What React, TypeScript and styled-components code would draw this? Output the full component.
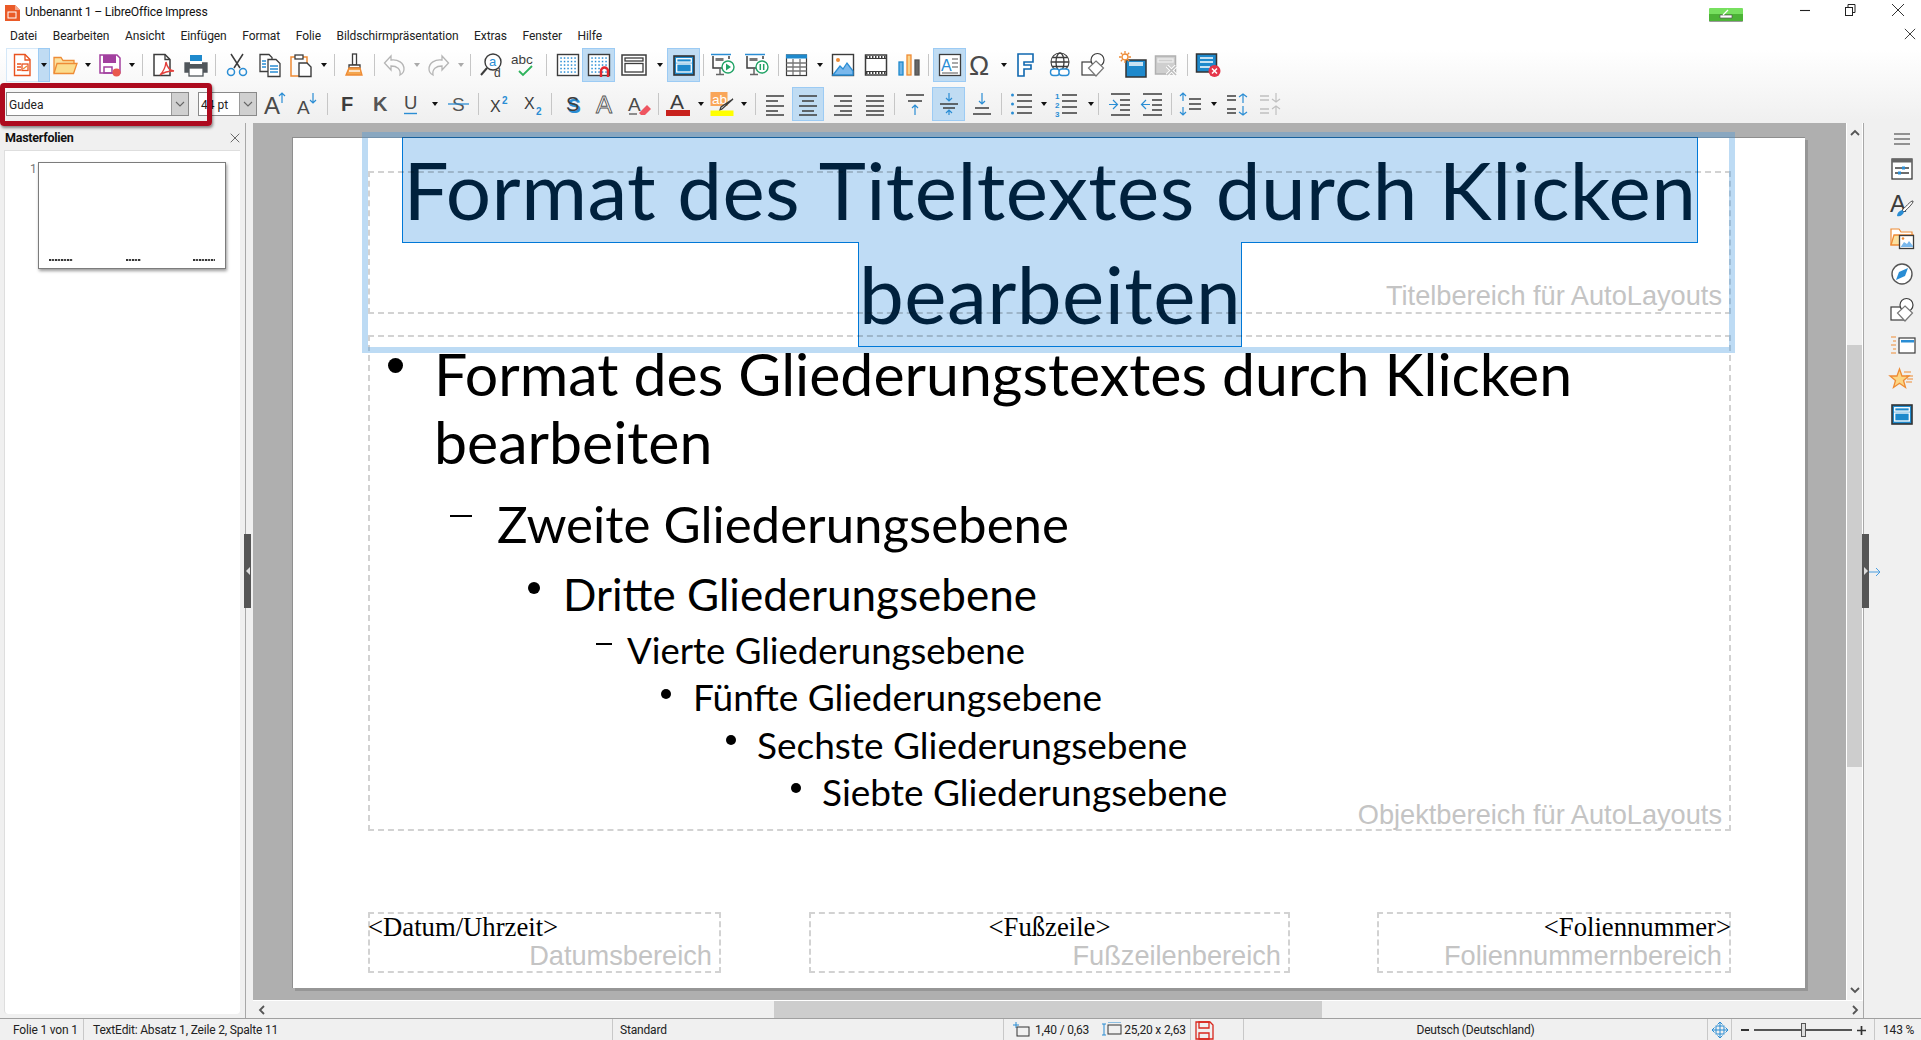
import React from "react";
import styled, { createGlobalStyle, css } from "styled-components";

const Global = createGlobalStyle`
  html, body { margin: 0; padding: 0; overflow: hidden; background: #fff; }
  #root { width: 1921px; height: 1040px; }
`;
const UI = `Roboto, "Liberation Sans", sans-serif`;
const SLIDE = `Lato, "Noto Sans", sans-serif`;
const DK = "#3c3c3c";
const BL = "#2a8dd4";
const OR = "#ee8b35";

const Page = styled.div`
  position: relative; width: 1921px; height: 1040px; display: flex; flex-direction: column;
  font-family: ${UI}; color: #222; overflow: hidden;
`;
const Head = styled.header`
  height: 123px; flex: none; background: linear-gradient(#fff 0, #fff 50px, #f0f0f0 120px);
`;
const TitleBar = styled.div`
  height: 26px; display: flex; align-items: center; padding-left: 5px; font-size: 12.2px; color: #111;
`;
const TitleText = styled.span` margin-left: 5px; margin-top: -2px; letter-spacing: -0.2px; `;
const Notice = styled.div`
  margin-left: auto; margin-top: 3px; width: 34px; height: 13px; border-radius: 1px;
  background: linear-gradient(#77e05f 0 45%, #4cb336 45% 100%); border-bottom: 1px solid #9a9a9a;
  display: flex; align-items: center; justify-content: center;
`;
const WinBtn = styled.div<{ $ml: number }>`
  margin-left: ${p => p.$ml}px; width: 14px; height: 14px; margin-top: -6px; flex: none;
`;
const WinEnd = styled.span` flex: 0 0 16px; `;
const MenuBar = styled.nav`
  height: 20px; display: flex; align-items: center; padding-left: 10px; gap: 15.6px; font-size: 12px; position: relative;
`;
const MenuItem = styled.span` letter-spacing: -0.08px; white-space: nowrap; `;
const DocClose = styled.div` margin-left: auto; margin-right: 5px; width: 12px; height: 12px; margin-top: -4px; `;
const Row = styled.div<{ $top: number }>`
  display: flex; align-items: center; height: 34px; margin-top: ${p => p.$top}px; padding-left: 6px;
`;
const Tool = styled.div<{ $w: number; $on?: boolean; $soft?: boolean }>`
  flex: 0 0 ${p => p.$w}px; min-width: 0; height: 34px; display: flex; align-items: center; justify-content: center;
  box-sizing: border-box; position: relative;
  ${p => p.$on && css` background: #c0dcf3; border: 1px solid #9ccbf4; `}
  ${p => p.$soft && css` border: 1px solid #d5e8f8; border-right: 0; background: #fbfdff; `}
  svg { flex: none; overflow: visible; }
`;
const Tri = styled.i<{ $off?: boolean }>`
  display: block; width: 0; height: 0; border-left: 3.5px solid transparent; border-right: 3.5px solid transparent;
  border-top: 4px solid ${p => (p.$off ? "#aaa" : "#111")};
`;
const SepLine = styled.i` display: block; width: 1px; height: 22px; background: #c6c6c6; `;
const Combo = styled.div<{ $w: number; $ml?: number }>`
  flex: 0 0 ${p => p.$w}px; margin-left: ${p => p.$ml || 0}px; height: 24px; box-sizing: border-box; background: #fff;
  border: 1px solid #8a8a8a; display: flex; align-items: center; font-size: 12px; color: #222; padding-left: 2px;
`;
const ComboText = styled.span` flex: 1; white-space: nowrap; padding-top: 1px; `;
const ComboBtn = styled.div`
  flex: 0 0 16px; height: 100%; background: #d0d0d0; border-left: 1px solid #9a9a9a;
  display: flex; align-items: center; justify-content: center;
`;
const Mark = styled.div`
  position: absolute; left: 0; top: 83px; width: 212px; height: 43px; box-sizing: border-box;
  border: 5px solid #ad0a1e; border-radius: 4px; box-shadow: 1px 2px 3px rgba(0,0,0,.45);
`;
const Main = styled.main` flex: 1; display: flex; min-height: 0; `;
const Panel = styled.aside`
  flex: 0 0 253px; background: #f0f0f0; display: flex; flex-direction: column; box-sizing: border-box;
  padding-right: 7px;
`;
const PanelInner = styled.div`
  flex: 1; display: flex; flex-direction: column; border-right: 1px solid #a8a8a8;
`;
const PanelHead = styled.div`
  height: 27px; padding: 2px 5px 0; box-sizing: border-box; display: flex; align-items: center; justify-content: space-between; flex: none;
  font-size: 12.5px; font-weight: 700; color: #111; letter-spacing: -0.25px;
`;
const PanelBody = styled.div`
  flex: 1; background: #fff; margin: 0 5px 4px 4px; border: 1px solid #dedede; border-width: 1px 0 0 1px;
  display: flex; padding: 11px 0 0 25px; gap: 2px; align-items: flex-start; border-radius: 0 0 4px 4px;
`;
const ThumbNo = styled.span` font-size: 12px; color: #777; width: 6px; `;
const Thumb = styled.div`
  width: 188px; height: 107px; box-sizing: border-box; border: 1px solid #7c7c7c; background: #fff;
  box-shadow: 1px 2px 3px rgba(0,0,0,.4); display: flex; align-items: flex-end; justify-content: space-between;
  padding: 0 10px 7px 10px;
`;
const Smudge = styled.i<{ $w: number }>`
  display: block; width: ${p => p.$w}px; height: 2px;
  background: repeating-linear-gradient(90deg, #333 0 2px, #bbb 2px 3px, #444 3px 5px, #ddd 5px 6px);
`;
const Center = styled.div` flex: 0 0 1610px; display: flex; flex-direction: column; min-width: 0; `;
const CanvasRow = styled.div` flex: 1; display: flex; min-height: 0; `;
const Canvas = styled.div`
  flex: 1; background: #afafaf; padding: 14px 0 0 39px; overflow: hidden; position: relative;
`;
const Slide = styled.div`
  position: relative; width: 1513px; height: 851px; background: #fff;
  box-shadow: 3px 3px 0 rgba(0,0,0,.14), inset 1px 1px 0 #8e8e8e;
`;
const VBar = styled.div`
  flex: 0 0 17px; box-sizing: border-box; background: #f0f0f0; border-left: 1px solid #fff; border-right: 1px solid #fff;
  display: flex; flex-direction: column; align-items: stretch;
`;
const VArrow = styled.div` height: 20px; flex: none; display: flex; align-items: center; justify-content: center; `;
const VTrack = styled.div` flex: 1; display: flex; flex-direction: column; padding: 202px 0 213px; box-sizing: border-box; `;
const VThumb = styled.div` flex: 1; background: #cdcdcd; `;
const HBar = styled.div`
  flex: 0 0 17px; background: #f0f0f0; display: flex; align-items: center; border-top: 1px solid #fff; box-sizing: content-box; position: relative;
`;
const HArrow = styled.div` flex: 0 0 17px; display: flex; align-items: center; justify-content: center; `;
const HTrack = styled.div` flex: 1; height: 100%; padding: 0 524px 0 504px; box-sizing: border-box; `;
const HThumb = styled.div` height: 100%; background: #cdcdcd; `;
const Side = styled.aside`
  flex: 1; background: #f0f0f0; border-left: 1px solid #a8a8a8; display: flex; flex-direction: column; align-items: center;
  padding: 3px 0 0 18px; box-sizing: border-box;
`;
const SideIcon = styled.div<{ $h: number }>` flex: 0 0 ${p => p.$h}px; display: flex; align-items: center; justify-content: center; `;
const Grip = styled.div<{ $x: number }>`
  position: absolute; left: ${p => p.$x}px; top: 534px; width: 7px; height: 74px; background: #555;
  display: flex; align-items: center; justify-content: center;
`;
const GripArrow = styled.i<{ $r?: boolean }>`
  width: 0; height: 0; border-top: 4px solid transparent; border-bottom: 4px solid transparent;
  ${p => (p.$r ? "border-left: 4px solid #ddd;" : "border-right: 4px solid #ddd;")}
`;
const SideFlyout = styled.div` position: absolute; left: 1869px; top: 563px; `;

/* slide content: a free canvas */
const Dashed = css`
  position: absolute; box-sizing: border-box; border: 2px dashed #d2d2d2; border-radius: 1px;
`;
const Box = styled.div<{ $l: number; $t: number; $w: number; $h: number }>`
  ${Dashed}
  left: ${p => p.$l}px; top: ${p => p.$t}px; width: ${p => p.$w}px; height: ${p => p.$h}px;
`;
const AreaLabel = styled.span<{ $b?: number }>`
  position: absolute; right: 7px; bottom: ${p => p.$b ?? 0}px; font: 27.2px/1.15 "Liberation Sans", sans-serif; color: #c4c4c4; white-space: nowrap;
`;
const FieldText = styled.div<{ $a: string }>`
  font: 26.7px/28px "Liberation Serif", serif; color: #000; text-align: ${p => p.$a}; margin: -1px -2px 0;
`;
const Frame = styled.div`
  position: absolute; left: 70px; top: -5px; width: 1373px; height: 221px; box-sizing: border-box;
  border: 6px solid rgba(66,152,224,.35); pointer-events: none;
`;
const TitleSel = styled.div`
  position: absolute; left: 110px; top: 0; width: 1296px; display: flex; flex-direction: column; align-items: center;
  mix-blend-mode: multiply;
`;
const SelLine = styled.div<{ $w: number; $h: number; $top?: boolean }>`
  width: ${p => p.$w}px; height: ${p => p.$h}px; box-sizing: border-box; background: #bfdcf5; border: 1px solid #0078d7;
  ${p => !p.$top && css` border-top: 0; margin-top: -1px; height: ${p.$h + 1}px; position: relative;
      &::before { content: ""; position: absolute; left: 0; right: 0; top: -1px; height: 2px; background: #bfdcf5; } `}
  display: flex; align-items: center; justify-content: center;
`;
const TitleLine = styled.span`
  font: 400 80px/1 ${SLIDE}; color: #00213d; white-space: nowrap; letter-spacing: 0.45px; position: relative; top: -1px;
`;
const Outline = styled.div`
  position: absolute; left: 76px; top: 198px; width: 1363px; height: 496px; box-sizing: border-box; padding-top: 3px;
  border: 2px dashed #d2d2d2; border-radius: 1px;
`;
const OItem = styled.div<{ $x: number; $mt: number; $lh: number; $fs: number }>`
  display: flex; margin-left: ${p => p.$x}px; margin-top: ${p => p.$mt}px; font: 400 ${p => p.$fs}px/${p => p.$lh}px ${SLIDE}; color: #000; white-space: nowrap;
`;
const OMarker = styled.div<{ $w: number }>` flex: 0 0 ${p => p.$w}px; position: relative; `;
const Dot = styled.i<{ $d: number; $y: number }>`
  position: absolute; left: 0; top: ${p => p.$y}px; width: ${p => p.$d}px; height: ${p => p.$d}px; border-radius: 50%; background: #000;
`;
const Dash = styled.i<{ $d: number; $y: number }>`
  position: absolute; left: 0; top: ${p => p.$y}px; width: ${p => p.$d}px; height: 2px; background: #000;
`;

const Status = styled.footer`
  height: 21px; flex: none; border-top: 1px solid #a0a0a0; background: #f0f0f0; display: flex; align-items: center;
  font-size: 12px; color: #222; letter-spacing: -0.18px; white-space: nowrap;
`;
const Cell = styled.div<{ $w: number; $pl?: number; $c?: boolean; $line?: boolean }>`
  flex: 0 0 ${p => p.$w}px; box-sizing: border-box; padding-left: ${p => p.$pl || 0}px; padding-top: 1px; height: 21px; display: flex; align-items: center;
  ${p => p.$c && "justify-content: center;"}
  ${p => p.$line && "border-right: 1px solid #c8c8c8;"}
`;
const StatText = styled.span<{ $ml?: number }>` margin-left: ${p => p.$ml || 0}px; `;
const SizeIcon = styled.svg` margin-left: 13px; `;
const ZoomTrack = styled.div`
  position: relative; flex: 0 0 98px; height: 2px; background: #555; margin: 0 4px;
`;
const ZoomKnob = styled.i`
  position: absolute; left: 47px; top: -6px; width: 3px; height: 12px; background: #ddd; border: 1px solid #555;
`;

/* ---- icons ---- */
const S: React.FC<{ s?: number; h?: number; vb?: string; children: React.ReactNode }> = ({ s = 24, h, vb = "0 0 24 24", children }) => (
  <svg width={s} height={h ?? s} viewBox={vb} fill="none" strokeWidth={1.3} overflow="visible">{children}</svg>
);
type L = [number, number, number];
const Hl = ({ l, c = DK, w = 1.4 }: { l: L[]; c?: string; w?: number }) => (
  <path d={l.map(([a, b, y]) => `M${a} ${y}H${b}`).join("")} stroke={c} strokeWidth={w} />
);
const ST = ({ x, y, s, c = DK, w, f = "Liberation Sans", children }: any) => (
  <text x={x} y={y} fontSize={s} fill={c} fontWeight={w} fontFamily={f}>{children}</text>
);
const gridDots = (() => {
  const out: React.ReactNode[] = [];
  for (let x = 5; x <= 19; x += 3.5) for (let y = 5; y <= 19; y += 3.5) out.push(<rect key={x + "-" + y} x={x - .7} y={y - .7} width={1.5} height={1.5} fill={BL} />);
  return out;
})();
const iMaster = (
  <S><rect x="2" y="3" width="20" height="19" fill="#1e89cc" stroke="#333" strokeWidth="1.6" /><rect x="4.7" y="5.7" width="14.6" height="3.4" stroke="#fff" /><rect x="4.7" y="11" width="14.6" height="8" stroke="#fff" /></S>
);
const screen = (
  <>
    <path d="M0 1.5H20" stroke={BL} strokeWidth="1.5" />
    <path d="M2 3V15H14" stroke={DK} strokeWidth="1.5" /><path d="M18 3V6" stroke={DK} strokeWidth="1.5" />
    <path d="M9 15V21M5 21.5H13" stroke="#666" strokeWidth="1.5" /><rect x="4.5" y="5" width="8" height="3" fill="#777" />
  </>
);
const I: Record<string, React.ReactNode> = {
  newDoc: <S><path d="M3.5 1.5H14l5 5v16H3.5z" fill="#fff" stroke="#e9531f" strokeWidth="1.4" /><path d="M14 1.5V7h5" stroke="#e9531f" /><path d="M6 11h4M6 14h4M6 17h4" stroke="#e9531f" /><rect x="11" y="11" width="6" height="6.5" stroke="#e9531f" /><path d="M12 16l4-3" stroke={OR} /></S>,
  open: <S><path d="M1 20V4.5h7l2 3h11V11" fill="#fbe1a0" stroke={OR} strokeWidth="1.3" /><path d="M1 20.5 4 10.5H24L20.5 20.5z" fill="#fbdc8d" stroke={OR} strokeWidth="1.3" /></S>,
  save: <S><path d="M2 2h17l3 3v15H2z" fill="#fff" stroke="#a2409f" strokeWidth="1.5" /><rect x="5" y="2" width="13" height="8" fill="#a2409f" /><rect x="6" y="14" width="8" height="6" stroke="#a2409f" strokeWidth="1.5" /><circle cx="18.5" cy="19.5" r="4" fill="#e9584d" /></S>,
  pdf: <S><path d="M3 1.5H14L19 6.5V22.5H3z" fill="#fff" stroke={DK} strokeWidth="1.5" /><path d="M14 1.5V6.5H19" stroke={DK} /><path d="M23 18c-4-.5-7-4-8-9-.5 5-3 10-6 13 4-3 9-4 14-4z" stroke="#e4403c" strokeWidth="1.4" /></S>,
  print: <S s={26} vb="0 0 26 24"><rect x="7" y="2" width="12" height="9" fill="#1e89cc" /><path d="M2 10h22v9H2z" fill="#50565b" stroke="#50565b" /><rect x="7" y="8" width="12" height="3" fill="#fff" /><rect x="6" y="15" width="14" height="8" fill="#fff" stroke="#50565b" /></S>,
  cut: <S s={24}><path d="M6 1l9 14M18 1 9 15" stroke={DK} strokeWidth="1.5" /><circle cx="6" cy="19" r="3.5" stroke={BL} strokeWidth="1.5" /><circle cx="18" cy="19" r="3.5" stroke={BL} strokeWidth="1.5" /></S>,
  copy: <S><path d="M2 1.5h9l3 3v14H2z" fill="#fff" stroke={DK} /><path d="M10 6.500h8l4 4v13H10z" fill="#fff" stroke={DK} /><Hl c={BL} l={[[4, 8, 8], [4, 8, 11], [4, 8, 14], [12, 20, 13], [12, 20, 16], [12, 20, 19]]} /></S>,
  paste: <S><path d="M6 4H2v19h14" stroke={OR} strokeWidth="1.5" /><path d="M14 4h4v6" stroke={OR} strokeWidth="1.5" /><rect x="6" y="2" width="8" height="4" fill="#fff" stroke={DK} /><path d="M10 10h8l4 4v9.500H10z" fill="#fff" stroke={DK} strokeWidth="1.4" /></S>,
  clone: <S><rect x="10.500" y="1" width="4" height="11" fill="#fff" stroke={DK} strokeWidth="1.3" /><path d="M7 12h11v3H7z" fill="#fff" stroke={DK} /><path d="M4 22l3-7h11l2 7z" fill="#f4a64f" stroke={OR} /><Hl c="#fff" l={[[7, 18, 18]]} /></S>,
  undo: <S><path d="M2.500 10 9 3v4c7-1 13 3 13 9 0 3-2 5-4 6 1-6-3-9-9-9v4z" stroke="#b5b5b5" strokeWidth="1.3" /></S>,
  redo: <S><path d="M21.500 10 15 3v4C8 6 2 10 2 16c0 3 2 5 4 6-1-6 3-9 9-9v4z" stroke="#b5b5b5" strokeWidth="1.3" /></S>,
  find: <S s={26} vb="0 0 26 24"><circle cx="14" cy="9" r="8" fill="#fff" stroke={DK} strokeWidth="1.4" /><path d="M8 15 2 22" stroke={DK} strokeWidth="2" /><ST x={10} y={13} s={13} c={BL}>a</ST><ST x={15} y={24} s={12}>d</ST></S>,
  spell: <S s={26} vb="0 0 26 24"><ST x={0} y={11} s={13.500}>abc</ST><path d="M8 18l4 4 9-9" stroke="#2eb35c" strokeWidth="1.8" /></S>,
  grid: <S><rect x="1.500" y="1.500" width="21" height="21" fill="#fff" stroke={DK} strokeWidth="1.4" />{gridDots}</S>,
  snap: <S><rect x="1.500" y="1.500" width="21" height="21" fill="#fff" stroke={DK} strokeWidth="1.4" />{gridDots}<path d="M14 24v-6a3.500 3.500 0 0 1 7 0v6" stroke="#e2272f" strokeWidth="2.4" /></S>,
  display: <S s={26} vb="0 0 26 24"><rect x="1" y="2" width="24" height="20" fill="#fff" stroke={DK} strokeWidth="1.5" /><rect x="4" y="5" width="18" height="3" stroke={DK} /><rect x="4" y="10.500" width="18" height="8.500" stroke={DK} /></S>,
  master: iMaster,
  play: <S s={26} vb="0 0 26 24">{screen}<circle cx="17" cy="14" r="6" fill="#fff" stroke="#21a366" strokeWidth="1.4" /><path d="M15 10.500v7l5-3.500z" fill="#21a366" /></S>,
  pause: <S s={26} vb="0 0 26 24">{screen}<circle cx="17" cy="14" r="6" fill="#fff" stroke="#21a366" strokeWidth="1.4" /><path d="M15.300 11v6M18.700 11v6" stroke="#21a366" strokeWidth="1.5" /></S>,
  table: <S><rect x="1.500" y="2" width="20" height="20.500" fill="#fff" stroke={DK} strokeWidth="1.2" /><rect x="1" y="1.500" width="21" height="4" fill="#1e89cc" /><path d="M1.500 10h20M1.500 14h20M1.500 18h20M8 6v16M15 6v16" stroke="#777" /></S>,
  image: <S><rect x="1.500" y="1.500" width="21" height="21" fill="#fff" stroke={DK} strokeWidth="1.4" /><path d="M2 22l7-9 3 3 4-6 6 8v4z" fill="#7ab8ec" stroke={BL} /><circle cx="7" cy="7" r="2" fill={OR} /></S>,
  video: <S><rect x="1.500" y="2" width="21" height="20" fill="#fff" stroke={DK} strokeWidth="1.5" /><path d="M2 5.500h20M2 18.500h20" stroke={DK} strokeWidth="1.2" /><path d="M2 4h20M2 20h20" stroke={DK} strokeWidth="2" strokeDasharray="1.500 1.500" /></S>,
  chart: <S><rect x="2" y="9" width="4" height="13" fill="#6fb4e8" stroke="#1e89cc" /><rect x="10" y="2" width="4" height="20" fill="#fbd48a" stroke={OR} /><rect x="18" y="7" width="4" height="15" fill="#666" stroke="#555" /></S>,
  textbox: <S><rect x="1.500" y="1.500" width="21" height="21" fill="#fff" stroke={DK} strokeWidth="1.3" /><ST x={3} y={18} s={16} c={BL}>A</ST><Hl w={1.2} c="#555" l={[[14, 20, 6], [14, 20, 10], [14, 20, 14], [4, 20, 20]]} /></S>,
  omega: <S s={26} vb="0 0 26 24"><ST x={1} y={22} s={27} c="#4a4a4a">Ω</ST></S>,
  fontwork: <S s={20} h={24} vb="0 0 20 24"><path d="M2 1h15v8h-9v3h7v4H8v7H2z" fill="#fff" stroke="#1068b0" strokeWidth="1.6" /></S>,
  link: <S s={26} vb="0 0 26 26"><circle cx="13" cy="10" r="9" fill="#fff" stroke={DK} strokeWidth="1.1" /><ellipse cx="13" cy="10" rx="4" ry="9" stroke={DK} /><path d="M4 10h18M5.500 5.500h15M5.500 14.500h15" stroke={DK} /><rect x="3.500" y="17" width="9" height="6.500" rx="3" fill="#fff" stroke={BL} strokeWidth="1.4" /><rect x="12" y="17" width="10" height="6.500" rx="3" fill="#fff" stroke={BL} strokeWidth="1.4" /></S>,
  shapes: <S><rect x="1" y="9" width="13" height="13" fill="#fff" stroke={DK} strokeWidth="1.2" /><circle cx="16.500" cy="7" r="6.500" fill="#fff" stroke={DK} strokeWidth="1.2" /><path d="M15 8l7.500 7L15 23 7.500 15z" fill="#fff" stroke="#777" strokeWidth="1.200" /></S>,
  sun: <S s={30} vb="0 0 30 30"><rect x="8" y="10" width="20" height="17" fill="#1e89cc" stroke="#333" strokeWidth="1.500" /><path d="M11 15h14M11 13h14" stroke="#fff" /><circle cx="7" cy="7" r="3" fill="#fff" stroke={OR} /><path d="M7 1v2.500M7 10.500V13M1 7h2.500M10.500 7H13M2.800 2.800l1.800 1.800M9.400 9.400l1.800 1.800M2.800 11.200l1.800-1.800M9.400 4.600l1.800-1.800" stroke={OR} /></S>,
  grayX: <S><rect x="1.500" y="3" width="20" height="18" fill="#cfcfcf" stroke="#b0b0b0" strokeWidth="1.500" /><rect x="4" y="6" width="15" height="3" stroke="#eee" /><path d="M13 13l9 9M22 13l-9 9" stroke="#fff" strokeWidth="3.400" /><path d="M13 13l9 9M22 13l-9 9" stroke="#bdbdbd" strokeWidth="1.600" /></S>,
  redX: <S s={26} vb="0 0 26 26"><rect x="1.500" y="2" width="20" height="18" fill="#1e89cc" stroke="#333" strokeWidth="1.500" /><path d="M5 6h13M5 10h13M5 15h10" stroke="#fff" /><circle cx="19.500" cy="19" r="6" fill="#e5364a" /><path d="M17 16.500l5 5M22 16.500l-5 5" stroke="#fff" strokeWidth="1.500" /></S>,
  grow: <S><ST x={3} y={22} s={24} c="#4a4a4a">A</ST><path d="M21 11V1M18 4l3-3 3 3" stroke={BL} strokeWidth="1.200" /></S>,
  shrink: <S><ST x={3} y={22} s={19} c="#4a4a4a">A</ST><path d="M19 1v10M16 8l3 3 3-3" stroke={BL} strokeWidth="1.200" /></S>,
  bold: <S><ST x={6} y={19} s={20} w={700}>F</ST></S>,
  ital: <S><ST x={5} y={19} s={20} w={700} c="#555">K</ST></S>,
  under: <S><ST x={4} y={17} s={18.500} c="#4a4a4a">U</ST><path d="M4 21.500h13" stroke={BL} strokeWidth="1.400" /></S>,
  strike: <S><ST x={5} y={19} s={19} c="#555">S</ST><path d="M1 12h21" stroke={BL} strokeWidth="1.300" /></S>,
  sup: <S><ST x={3} y={20} s={16}>X</ST><ST x={15} y={12} s={10} c={BL} w={700}>2</ST></S>,
  sub: <S><ST x={3} y={17} s={16}>X</ST><ST x={15} y={23} s={10} c={BL} w={700}>2</ST></S>,
  shadow: <S><ST x={4.500} y={21} s={20} c={BL} w={700}>S</ST><ST x={3} y={19} s={20} c="#3c3c3c">S</ST></S>,
  outlineA: <S><text x={2} y={21} fontSize={24} fontFamily="Liberation Sans" fill="#fff" stroke="#555" strokeWidth=".9">A</text></S>,
  erase: <S><ST x={5} y={19} s={19} c="#4a4a4a">A</ST><path d="M16 21l8-8 4 4-6 6h-4z" fill="#ee5560" /><path d="M6 22h8" stroke="#555" /></S>,
  fcolor: <S><ST x={4} y={17} s={21} c="#3c3c3c">A</ST><rect x="0" y="18" width="24" height="6" fill="#c8211d" /></S>,
  hl: <S><rect x="0.500" y="0" width="17" height="14" fill="#f9a65a" /><text x="2" y="12" fontSize="13.500" fontFamily="Liberation Sans" fill="#fff">ab</text><path d="M23 7 12 17l-2 1 1-3z" fill="#fff" stroke={DK} /><rect x="0.500" y="18.500" width="23" height="5.500" fill="#ffff00" /></S>,
  aL: <S><Hl l={[[2, 20, 4], [2, 14, 9], [2, 20, 14], [2, 14, 19], [2, 20, 23]]} /></S>,
  aC: <S><Hl l={[[3, 21, 4], [6, 18, 9], [3, 21, 14], [6, 18, 19], [3, 21, 23]]} /></S>,
  aR: <S><Hl l={[[4, 22, 4], [10, 22, 9], [4, 22, 14], [10, 22, 19], [4, 22, 23]]} /></S>,
  aJ: <S><Hl l={[[3, 21, 4], [3, 21, 9], [3, 21, 14], [3, 21, 19], [3, 21, 23]]} /></S>,
  vT: <S><Hl l={[[3, 21, 3], [5, 19, 9]]} /><path d="M12 23V13M9 16l3-3 3 3" stroke={BL} strokeWidth="1.200" /></S>,
  vM: <S><Hl l={[[3, 21, 12], [6, 18, 16]]} /><path d="M12 1v8M9 6l3 3 3-3M12 23v-5M9 21l3-3 3 3" stroke={BL} strokeWidth="1.200" /></S>,
  vB: <S><Hl l={[[5, 19, 16], [3, 21, 22]]} /><path d="M12 1v11M9 9l3 3 3-3" stroke={BL} strokeWidth="1.200" /></S>,
  bullet: <S><Hl l={[[7, 22, 3], [7, 22, 9], [7, 22, 15], [7, 22, 21]]} /><circle cx="2.500" cy="3" r="1.500" fill={BL} /><circle cx="2.500" cy="12" r="1.500" fill={BL} /><circle cx="2.500" cy="21" r="1.500" fill={BL} /></S>,
  number: <S><Hl l={[[7, 22, 3], [7, 22, 9], [7, 22, 15], [7, 22, 21]]} /><ST x={0} y={7} s={8} c={BL} w={700}>1</ST><ST x={0} y={16} s={8} c={BL} w={700}>2</ST><ST x={0} y={25} s={8} c={BL} w={700}>3</ST></S>,
  indent: <S><Hl l={[[3, 22, 2], [12, 22, 8], [12, 22, 13], [12, 22, 18], [3, 22, 23]]} /><path d="M1 12.500h8M5 8l4.500 4.500L5 17" stroke={BL} strokeWidth="1.200" /></S>,
  outdent: <S><Hl l={[[3, 22, 2], [12, 22, 8], [12, 22, 13], [12, 22, 18], [3, 22, 23]]} /><path d="M10 12.500H2M6 8l-4.500 4.500L6 17" stroke={BL} strokeWidth="1.200" /></S>,
  lineSp: <S><Hl l={[[10, 22, 7], [10, 22, 12], [10, 22, 17]]} /><path d="M4 1v8M1 4l3-3 3 3M4 23v-8M1 20l3 3 3-3" stroke={BL} strokeWidth="1.200" /></S>,
  paraInc: <S><Hl l={[[1, 10, 4], [1, 10, 8], [1, 10, 17], [1, 10, 21]]} /><path d="M17 11V2M13 5l4-3 4 3M17 14v9M13 20l4 3 4-3" stroke={BL} strokeWidth="1.200" /></S>,
  paraDec: <S><Hl c="#c0c0c0" l={[[1, 10, 4], [1, 10, 8], [1, 10, 17], [1, 10, 21]]} /><path d="M17 1v9M13 7l4 3 4-3M17 23v-9M13 17l4-3 4 3" stroke="#c0c0c0" strokeWidth="1.200" /></S>,
};

type Item = [string, number, string?];
/* kinds: icon name | "|" separator | "v" arrow | "v-" disabled arrow | "_" gap; 3rd: "on" active, "soft" */
const row1: Item[] = [
  ["newDoc", 32, "soft"], ["v", 12, "on"], ["open", 30], ["v", 16], ["save", 27], ["v", 18], ["|", 2], ["pdf", 40], ["print", 26], ["|", 12],
  ["cut", 32], ["copy", 34], ["paste", 28], ["v", 18], ["|", 2], ["clone", 38], ["|", 2], ["undo", 38], ["v-", 8], ["redo", 36], ["v-", 8], ["|", 10],
  ["find", 34], ["spell", 30], ["|", 14], ["grid", 29], ["snap", 33, "on"], ["display", 38], ["v", 14], ["master", 33, "on"], ["|", 6],
  ["play", 36], ["pause", 32], ["|", 8], ["table", 30], ["v", 16], ["image", 30], ["video", 36], ["chart", 30], ["|", 9], ["textbox", 33, "on"],
  ["omega", 30], ["v", 16], ["fontwork", 28], ["link", 40], ["shapes", 26], ["_", 10], ["sun", 34], ["grayX", 32], ["|", 10], ["redX", 32],
];
const row2: Item[] = [
  ["grow", 32], ["shrink", 34], ["|", 8], ["bold", 32], ["ital", 34], ["under", 30], ["v", 16], ["strike", 32], ["|", 6], ["sup", 36], ["sub", 32], ["|", 4],
  ["shadow", 44], ["outlineA", 18], ["erase", 40], ["|", 6], ["fcolor", 34], ["v", 12], ["hl", 30], ["v", 14], ["|", 9],
  ["aL", 32], ["aC", 32, "on"], ["aR", 36], ["aJ", 30], ["|", 8], ["vT", 34], ["vM", 33, "on"], ["vB", 34], ["|", 4],
  ["bullet", 38], ["v", 6], ["number", 40], ["v", 8], ["|", 6], ["indent", 38], ["outdent", 26], ["|", 12], ["lineSp", 28], ["v", 18], ["paraInc", 30], ["paraDec", 36],
];
const renderItems = (items: Item[]) =>
  items.map(([k, w, f], i) => (
    <Tool key={i} $w={w} $on={f === "on"} $soft={f === "soft"}>
      {k === "|" ? <SepLine /> : k === "v" ? <Tri /> : k === "v-" ? <Tri $off /> : k === "_" ? null : I[k]}
    </Tool>
  ));

const chevDown = <svg width="10" height="6" viewBox="0 0 10 6" fill="none"><path d="M1 1l4 4 4-4" stroke="#666" strokeWidth="1.1" /></svg>;
const X = ({ s = 14, w = 1 }: { s?: number; w?: number }) => (
  <svg width={s} height={s} viewBox="0 0 14 14" fill="none"><path d="M1 1l12 12M13 1 1 13" stroke="#333" strokeWidth={w} /></svg>
);
const chev = (d: string) => <svg width="10" height="10" viewBox="0 0 10 10" fill="none"><path d={d} stroke="#555" strokeWidth="1.8" /></svg>;

const sideIcons: [number, React.ReactNode][] = [
  [26, <svg width="16" height="12" viewBox="0 0 16 12"><path d="M0 1h16M0 6h16M0 11h16" stroke="#333" strokeWidth="1.2" /></svg>],
  [34, <S><rect x="2" y="2" width="20" height="20" fill="#fff" stroke={DK} strokeWidth="1.300" /><rect x="2" y="2" width="20" height="3.500" fill="#666" /><path d="M5 11h14M5 16h14" stroke={DK} /><rect x="12" y="9.500" width="3" height="3" fill={BL} /><rect x="8" y="14.500" width="3" height="3" fill={BL} /></S>],
  [35, <S><ST x={0} y={20} s={24} c={DK}>A</ST><path d="M23 9c1 2-8 10-9 11l-2-2c2-1 9-10 11-9z" fill="#fff" stroke={DK} strokeWidth=".9" /><path d="M7 24c0-3 2-5 5-6l2 2c-1 3-4 5-7 4z" fill={BL} /></S>],
  [35, <S><path d="M1 18V2h8l2 3h11v13" fill="#fff" stroke={OR} strokeWidth="1.200" /><path d="M1 18 4 8h19l-3 10z" fill="#fbe1a0" stroke={OR} /><rect x="9.500" y="8.500" width="14" height="13" fill="#fff" stroke={DK} strokeWidth="1.300" /><path d="M10 21l4-6 3 2 2-3 4 5v1H10z" fill="#7ab8ec" /><circle cx="13" cy="11.500" r="1.300" fill={OR} /></S>],
  [36, <S><circle cx="12" cy="12" r="10" fill="#fff" stroke="#555" strokeWidth="1.400" /><path d="M18 6l-3 8-9 4 3-8z" fill={BL} /></S>],
  [35, I.shapes],
  [35, <S><rect x="9" y="5" width="16" height="15" fill="#fff" stroke={DK} strokeWidth="1.200" /><rect x="11" y="7" width="13" height="2.500" fill={BL} /><path d="M1 4h5M3 8h3M1 12h5M3 16h3M1 20h5" stroke={OR} strokeWidth="1.100" /></S>],
  [34, <S><path d="M9.500 2 12 9h7l-5.500 4.500 2 7-6-4.200-6 4.200 2-7L0 9h7z" fill="#fcd684" stroke={OR} /><path d="M14 5h7M16 9h7M17 12h6M16 15h6" stroke={OR} strokeWidth="1.100" /></S>],
  [35, iMaster],
];

const levels = [
  { x: 18, w: 46, mt: 0, lh: 68, fs: 59, k: "dot", d: 15, y: 18, t: ["Format des Gliederungstextes durch Klicken", "bearbeiten"] },
  { x: 80, w: 47, mt: 18, lh: 60, fs: 51, k: "dash", d: 22, y: 21, t: ["Zweite Gliederungsebene"] },
  { x: 158, w: 35, mt: 14, lh: 52, fs: 44, k: "dot", d: 12, y: 14, t: ["Dritte Gliederungsebene"] },
  { x: 226, w: 31, mt: 10, lh: 40, fs: 36.5, k: "dash", d: 16, y: 13, t: ["Vierte Gliederungsebene"] },
  { x: 291, w: 32, mt: 7, lh: 40, fs: 37, k: "dot", d: 10, y: 12, t: ["Fünfte Gliederungsebene"] },
  { x: 356, w: 31, mt: 8, lh: 40, fs: 37, k: "dot", d: 10, y: 10, t: ["Sechste Gliederungsebene"] },
  { x: 421, w: 31, mt: 7, lh: 40, fs: 37, k: "dot", d: 10, y: 11, t: ["Siebte Gliederungsebene"] },
];

export default function App() {
  return (
    <>
      <Global />
      <Page>
        <Head>
          <TitleBar>
            <svg width="15" height="16" viewBox="0 0 15 16"><path d="M0 0h10l5 5v11H0z" fill="#ea5a28" /><path d="M10 0v5h5z" fill="#f6a58a" /><rect x="3" y="7" width="8" height="6" fill="none" stroke="#fff" /></svg>
            <TitleText>Unbenannt 1 – LibreOffice Impress</TitleText>
            <Notice>
              <svg width="14" height="10" viewBox="0 0 14 10"><path d="M1 6h12v3H1z" fill="#fff" stroke="#555" strokeWidth=".7" /><path d="M4 6l5-5" stroke="#fff" strokeWidth="1.200" /></svg>
            </Notice>
            <WinBtn $ml={55}><svg width="14" height="14"><path d="M2 7.500h10" stroke="#222" strokeWidth="1.100" /></svg></WinBtn>
            <WinBtn $ml={31}><svg width="14" height="14" fill="none"><rect x="2.500" y="4.500" width="7" height="8" stroke="#222" /><path d="M5 4.500V1.500h7v8H9.500" stroke="#222" /></svg></WinBtn>
            <WinBtn $ml={34}><X s={14} w={1} /></WinBtn>
            <WinEnd />
          </TitleBar>
          <MenuBar>
            {["Datei", "Bearbeiten", "Ansicht", "Einfügen", "Format", "Folie", "Bildschirmpräsentation", "Extras", "Fenster", "Hilfe"].map(m => <MenuItem key={m}>{m}</MenuItem>)}
            <DocClose><X s={12} w={1.100} /></DocClose>
          </MenuBar>
          <Row $top={2}>{renderItems(row1)}</Row>
          <Row $top={5}>
            <Combo $w={183}><ComboText>Gudea</ComboText><ComboBtn>{chevDown}</ComboBtn></Combo>
            <Combo $w={59} $ml={9}><ComboText>44 pt</ComboText><ComboBtn>{chevDown}</ComboBtn></Combo>
            {renderItems(row2)}
          </Row>
        </Head>
        <Main>
          <Panel>
            <PanelInner>
              <PanelHead>Masterfolien <X s={10} w={1} /></PanelHead>
              <PanelBody>
                <ThumbNo>1</ThumbNo>
                <Thumb><Smudge $w={24} /><Smudge $w={15} /><Smudge $w={22} /></Thumb>
              </PanelBody>
            </PanelInner>
          </Panel>
          <Center>
            <CanvasRow>
              <Canvas>
                <Slide>
                  <Box $l={76} $t={34} $w={1363} $h={143}>
                    <AreaLabel $b={1}>Titelbereich für AutoLayouts</AreaLabel>
                  </Box>
                  <Outline>
                    {levels.map(l => (
                      <OItem key={l.t[0]} $x={l.x} $mt={l.mt} $lh={l.lh} $fs={l.fs}>
                        <OMarker $w={l.w}>{l.k === "dot" ? <Dot $d={l.d} $y={l.y} /> : <Dash $d={l.d} $y={l.y} />}</OMarker>
                        <div>{l.t.map(t => <div key={t}>{t}</div>)}</div>
                      </OItem>
                    ))}
                    <AreaLabel $b={-1}>Objektbereich für AutoLayouts</AreaLabel>
                  </Outline>
                  <TitleSel>
                    <SelLine $w={1296} $h={106} $top><TitleLine>Format des Titeltextes durch Klicken</TitleLine></SelLine>
                    <SelLine $w={384} $h={104}><TitleLine>bearbeiten</TitleLine></SelLine>
                  </TitleSel>
                  <Frame />
                  <Box $l={76} $t={775} $w={353} $h={61}>
                    <FieldText $a="left">&lt;Datum/Uhrzeit&gt;</FieldText><AreaLabel>Datumsbereich</AreaLabel>
                  </Box>
                  <Box $l={517} $t={775} $w={481} $h={61}>
                    <FieldText $a="center">&lt;Fußzeile&gt;</FieldText><AreaLabel>Fußzeilenbereich</AreaLabel>
                  </Box>
                  <Box $l={1085} $t={775} $w={354} $h={61}>
                    <FieldText $a="right">&lt;Foliennummer&gt;</FieldText><AreaLabel>Foliennummernbereich</AreaLabel>
                  </Box>
                </Slide>
              </Canvas>
              <VBar>
                <VArrow>{chev("M1 7l4-4 4 4")}</VArrow>
                <VTrack><VThumb /></VTrack>
                <VArrow>{chev("M1 3l4 4 4-4")}</VArrow>
              </VBar>
            </CanvasRow>
            <HBar>
              <HArrow>{chev("M7 1 3 5l4 4")}</HArrow>
              <HTrack><HThumb /></HTrack>
              <HArrow>{chev("M3 1l4 4-4 4")}</HArrow>
            </HBar>
          </Center>
          <Side>
            {sideIcons.map(([h, ic], i) => <SideIcon key={i} $h={h}>{ic}</SideIcon>)}
          </Side>
        </Main>
        <Status>
          <Cell $w={84} $pl={13} $line>Folie 1 von 1</Cell>
          <Cell $w={529} $pl={9} $line>TextEdit: Absatz 1, Zeile 2, Spalte 11</Cell>
          <Cell $w={391} $pl={7} $line>Standard</Cell>
          <Cell $w={187} $pl={9} $line>
            <svg width="20" height="16" viewBox="0 0 20 16" fill="none"><path d="M3 0v6M0 3h6" stroke={BL} /><rect x="4" y="5" width="12" height="9" stroke="#333" /></svg>
            <StatText $ml={2}>1,40 / 0,63</StatText>
            <SizeIcon width="20" height="16" viewBox="0 0 20 16" fill="none"><rect x="6" y="3" width="13" height="9" stroke="#333" /><path d="M0 2h4M0 13h4M2 2v11M6 0h13" stroke={BL} /></SizeIcon>
            <StatText $ml={2}>25,20 x 2,63</StatText>
          </Cell>
          <Cell $w={53} $pl={4} $line>
            <svg width="19" height="19" viewBox="0 0 19 19" fill="none"><path d="M1 1h14l3 3v14H1z" stroke="#d8261c" strokeWidth="1.300" /><path d="M4 1h10v6H4zM4 12h10v6H4z" stroke="#d8261c" strokeWidth="1.300" /></svg>
          </Cell>
          <Cell $w={464} $c $line>Deutsch (Deutschland)</Cell>
          <Cell $w={24} $c $line>
            <svg width="16" height="16" viewBox="0 0 16 16" fill="none"><path d="M8 0v16M0 8h16M5.500 2.500 8 0l2.500 2.500M5.500 13.500 8 16l2.500-2.500M2.500 5.500 0 8l2.500 2.500M13.500 5.500 16 8l-2.500 2.500" stroke={BL} /><rect x="4" y="4" width="8" height="8" stroke={BL} /></svg>
          </Cell>
          <Cell $w={143} $c $line>
            <svg width="10" height="10"><path d="M1 5h8" stroke="#333" strokeWidth="2" /></svg>
            <ZoomTrack><ZoomKnob /></ZoomTrack>
            <svg width="11" height="11"><path d="M1 5.500h9M5.500 1v9" stroke="#333" strokeWidth="1.700" /></svg>
          </Cell>
          <Cell $w={47} $pl={8}>143 %</Cell>
        </Status>
        <Mark />
        <Grip $x={244}><GripArrow /></Grip>
        <Grip $x={1862}><GripArrow $r /></Grip>
        <SideFlyout><svg width="12" height="12" viewBox="0 0 12 12" fill="none"><path d="M0 6h11M7 2l4 4-4 4" stroke="#4a9ee0" /></svg></SideFlyout>
      </Page>
    </>
  );
}
